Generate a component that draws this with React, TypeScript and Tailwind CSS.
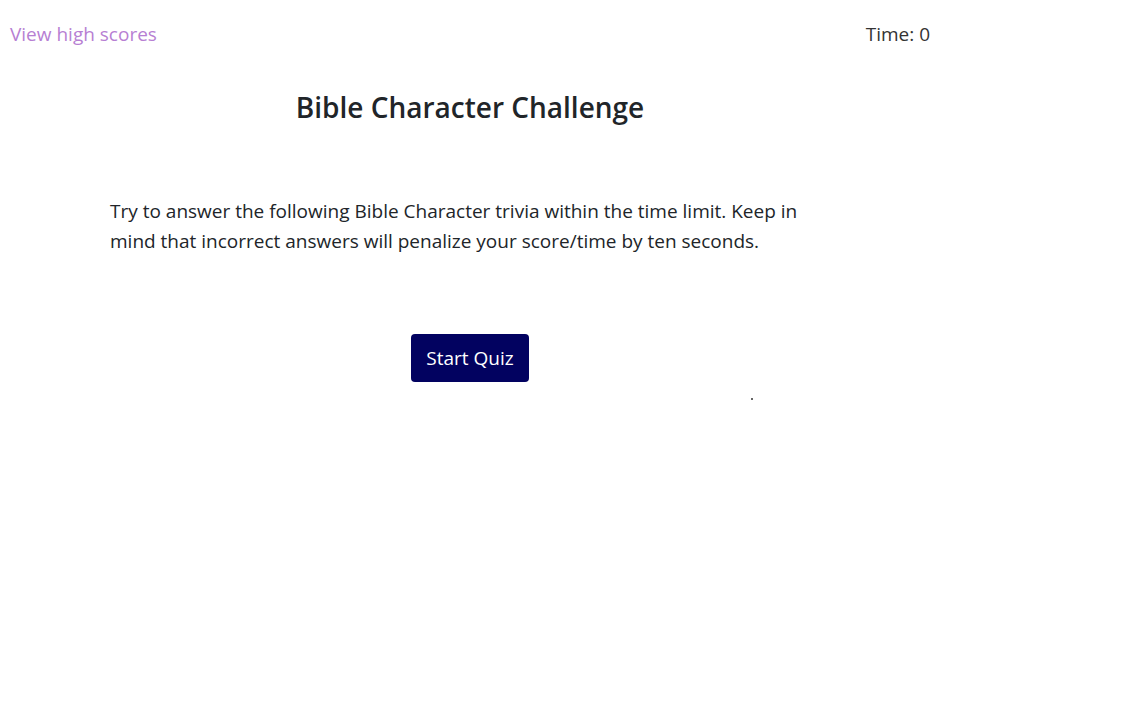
export default function App() {
  return (
    <div className="min-h-[716px] w-[1148px] bg-white text-[#212529]" style={{ fontFamily: '"Open Sans", "Noto Sans", sans-serif' }}>
      <div className="flex h-[68px] items-center">
        <a className="ml-[10px] text-[19px] text-[#b77fd3]">View high scores</a>
        <span className="ml-auto mr-[218px] text-[19px] text-[#333]">Time: 0</span>
      </div>
      <div className="ml-[110px] w-[720px]">
        <h1 className="text-center text-[28px] font-semibold leading-[78px]">Bible Character Challenge</h1>
        <p className="mt-[50px] text-[19px] leading-[30px]">
          Try to answer the following Bible Character trivia within the time limit. Keep in mind that incorrect answers will penalize your score/time by ten seconds.
        </p>
        <div className="mt-[78px] flex justify-center">
          <button className="h-[48px] w-[118px] rounded-[4px] bg-[#020260] text-[19px] text-white">Start Quiz</button>
        </div>
        <div className="relative h-[20px]">
          <span className="absolute left-[641px] top-[16px] h-[2px] w-[2px] rounded-full bg-[#333]" />
        </div>
      </div>
    </div>
  );
}
